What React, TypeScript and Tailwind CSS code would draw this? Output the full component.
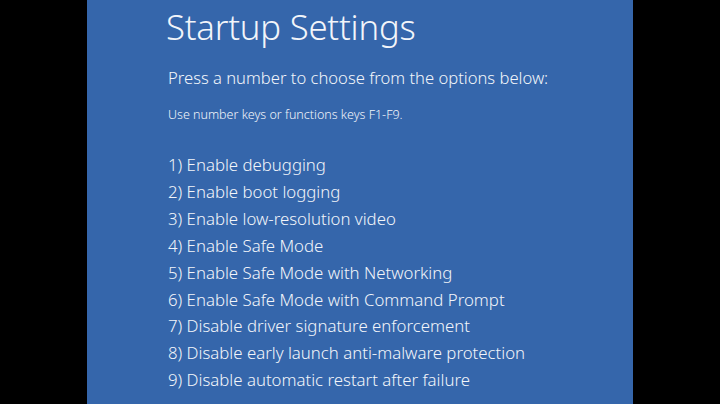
const options = [
  "1) Enable debugging",
  "2) Enable boot logging",
  "3) Enable low-resolution video",
  "4) Enable Safe Mode",
  "5) Enable Safe Mode with Networking",
  "6) Enable Safe Mode with Command Prompt",
  "7) Disable driver signature enforcement",
  "8) Disable early launch anti-malware protection",
  "9) Disable automatic restart after failure",
];

export default function App() {
  return (
    <div className="flex h-[404px] w-[720px] bg-black" style={{ fontFamily: '"Noto Sans", "Open Sans", sans-serif' }}>
      <div className="w-[87px] shrink-0" />
      <div className="flex w-[546px] flex-col bg-[#3566ab] pl-[81px] pt-[3px] text-[#f2f5fa]">
        <h1 className="-ml-[2px] text-[34.7px] font-light leading-[48px] tracking-[-0.2px]">Startup Settings</h1>
        <p className="mt-[15px] text-[16.6px] font-light leading-[24px]">Press a number to choose from the options below:</p>
        <p className="mt-[16px] text-[12.5px] font-light leading-[18px]">Use number keys or functions keys F1-F9.</p>
        <ul className="mt-[28px] flex flex-col">
          {options.map((o) => (
            <li key={o} className="text-[16.8px] font-light leading-[26.9px]">
              {o}
            </li>
          ))}
        </ul>
      </div>
      <div className="flex-1" />
    </div>
  );
}
